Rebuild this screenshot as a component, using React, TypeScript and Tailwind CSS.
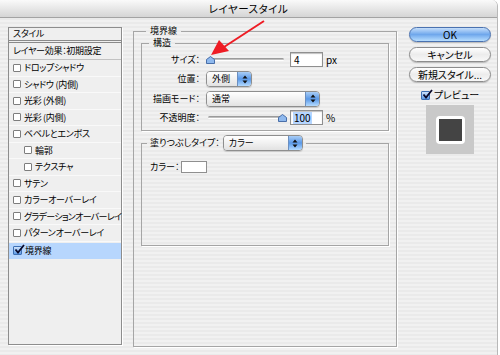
const jp = "font-['Noto_Sans_CJK_JP',sans-serif] [font-feature-settings:'palt']";

function Check({ on = false }: { on?: boolean }) {
  if (on)
    return (
      <span className="relative inline-block w-[9px] h-[9px] shrink-0 rounded-[1px] border border-[#3d6fb4] bg-gradient-to-b from-[#cfe3fb] to-[#5c9ae6]">
        <svg className="absolute -top-[3px] left-0" width="11" height="11" viewBox="0 0 11 11">
          <path d="M1.5 5.5 L4 8.5 L10 1" stroke="#0a0a2a" strokeWidth="1.8" fill="none" />
        </svg>
      </span>
    );
  return <span className="inline-block w-[8px] h-[8px] shrink-0 rounded-[1px] border border-[#7d7d7d] bg-white" />;
}

function Popup({ label, w }: { label: string; w: string }) {
  return (
    <div className={`${w} h-[16px] flex rounded-[4px] border border-[#8e8e8e] overflow-hidden shadow-[0_1px_1px_rgba(0,0,0,0.15)]`}>
      <div className="flex-1 flex items-center pl-[5px] bg-gradient-to-b from-white via-[#f1f1f1] to-[#e2e2e2] text-[9px] leading-[12px] text-black">{label}</div>
      <div className="w-[14px] flex items-center justify-center bg-gradient-to-b from-[#a9cdf6] via-[#5a98e6] to-[#b4dbff] border-l border-[#6b8fc0]">
        <svg width="6" height="9" viewBox="0 0 6 9">
          <path d="M3 0.5 L5.5 3.5 H0.5 Z M3 8.5 L5.5 5.5 H0.5 Z" fill="#111" />
        </svg>
      </div>
    </div>
  );
}

function Slider({ pos }: { pos: number }) {
  return (
    <div className="relative w-[76px] h-[10px] flex items-center">
      <div className="w-full h-[3px] rounded-full bg-gradient-to-b from-[#8a8a8a] to-[#d0d0d0] border-b border-white" />
      <svg className="absolute top-[1px]" style={{ left: pos - 4 }} width="9" height="8" viewBox="0 0 9 8">
        <path d="M4.5 0.5 L8.5 3.5 V7.5 H0.5 V3.5 Z" fill="#8fb9ee" stroke="#3c63a0" strokeWidth="0.9" />
      </svg>
    </div>
  );
}

function Field({ value, sel = false }: { value: string; sel?: boolean }) {
  return (
    <div className="w-[33px] h-[15px] bg-white border border-[#8f8f8f] shadow-[inset_0_1px_1px_rgba(0,0,0,0.25)] flex items-center pl-[2px] text-[10px]">
      <span className={sel ? "bg-[#b5d5ff] px-[1px] leading-[12px]" : "leading-[12px] pl-[1px]"}>{value}</span>
    </div>
  );
}

function Row({ children, indent = false, tight = false }: { children: React.ReactNode; indent?: boolean; tight?: boolean }) {
  return (
    <div className={`h-[16.5px] flex items-center gap-[3px] whitespace-nowrap ${indent ? "pl-[15px]" : "pl-[4px]"} border-b border-[#f9f9f9]`}>
      <Check />
      <span className={tight ? "tracking-[-0.7px]" : ""}>{children}</span>
    </div>
  );
}

function Aqua({ children, blue = false }: { children: React.ReactNode; blue?: boolean }) {
  return (
    <div
      className={`h-[15px] rounded-full flex items-center justify-center text-[10px] leading-[12px] text-black border shadow-[0_1px_1px_rgba(0,0,0,0.2)] ${
        blue
          ? "border-[#4a72b0] bg-gradient-to-b from-[#c5defa] via-[#6fa7ec] to-[#b8defe]"
          : "border-[#8c8c8c] bg-gradient-to-b from-white via-[#ececec] to-[#f8f8f8]"
      }`}
    >
      {children}
    </div>
  );
}

export default function App() {
  return (
    <div className={`relative w-[500px] h-[355px] overflow-hidden bg-white ${jp} text-black text-[9px]`}>
      <div className="w-[498px] h-[355px] rounded-tr-[6px] overflow-hidden bg-[image:repeating-linear-gradient(180deg,#f1f1f1_0px,#f1f1f1_2px,#eaeaea_2px,#eaeaea_4px)] border-r border-[#b8b8b8]">
        <div className="h-[18px] flex items-center justify-center bg-gradient-to-b from-[#fafafa] to-[#d5d5d5] border-b border-[#a3a3a3] text-[10.5px] tracking-[0.5px]">
          レイヤースタイル
        </div>

        <div className="flex items-start pl-[8px] pt-[9px]">
          <div className="w-[114px] h-[318px] border border-[#8d8d8d] bg-[#efefef] shadow-[1px_1px_0_#fff] tracking-[-0.3px]">
            <div className="h-[15px] flex items-center pl-[4px] border-b-[3px] border-double border-[#8a8a8a]">スタイル</div>
            <div className="h-[17px] flex items-center pl-[4px] border-b border-[#c2c2c2] whitespace-nowrap">レイヤー効果：初期設定</div>
            <Row>ドロップシャドウ</Row>
            <Row>シャドウ (内側)</Row>
            <Row>光彩 (外側)</Row>
            <Row>光彩 (内側)</Row>
            <Row>ベベルとエンボス</Row>
            <Row indent>輪郭</Row>
            <Row indent>テクスチャ</Row>
            <Row>サテン</Row>
            <Row>カラーオーバーレイ</Row>
            <Row tight>グラデーションオーバーレイ</Row>
            <Row>パターンオーバーレイ</Row>
            <div className="mt-[1px] h-[16px] flex items-center gap-[3px] pl-[4px] bg-[#b7d6fd]">
              <Check on />
              <span>境界線</span>
            </div>
          </div>

          <fieldset className="ml-[11px] -mt-[2px] w-[264px] border border-[#a5a5a5] shadow-[1px_1px_0_#fff] px-[7px]">
            <legend className="ml-[5px] px-[4px] leading-[12px]">境界線</legend>

            <fieldset className="border border-[#a5a5a5] shadow-[1px_1px_0_#fff] pb-[3px]">
              <legend className="ml-[7px] px-[4px] leading-[12px]">構造</legend>
              <div className="mt-[1px] h-[19px] flex items-center">
                <span className="w-[59px] text-right pr-[1px]">サイズ：</span>
                <div className="ml-[7px]"><Slider pos={2} /></div>
                <div className="ml-[6px]"><Field value="4" /></div>
                <span className="ml-[3px] text-[10px]">px</span>
              </div>
              <div className="h-[20px] flex items-center">
                <span className="w-[59px] text-right pr-[1px]">位置：</span>
                <div className="ml-[5px]"><Popup label="外側" w="w-[46px]" /></div>
              </div>
              <div className="h-[19px] flex items-center">
                <span className="w-[59px] text-right pr-[1px]">描画モード：</span>
                <div className="ml-[5px]"><Popup label="通常" w="w-[114px]" /></div>
              </div>
              <div className="h-[19px] flex items-center">
                <span className="w-[59px] text-right pr-[1px]">不透明度：</span>
                <div className="ml-[7px]"><Slider pos={74} /></div>
                <div className="ml-[6px]"><Field value="100" sel /></div>
                <span className="ml-[3px] text-[10px]">%</span>
              </div>
            </fieldset>

            <fieldset className="mt-[4px] border border-[#a5a5a5] shadow-[1px_1px_0_#fff]">
              <legend className="ml-[5px] px-[3px] h-[16px] flex items-center gap-[3px] leading-[12px]">
                <span>塗りつぶしタイプ：</span>
                <Popup label="カラー" w="w-[80px]" />
              </legend>
              <div className="h-[94px] pt-[9px] pl-[8px]">
                <div className="flex items-center gap-[2px]">
                  <span>カラー：</span>
                  <div className="w-[26px] h-[12px] bg-white border border-[#8f8f8f]" />
                </div>
              </div>
            </fieldset>
            <div className="h-[100px]" />
          </fieldset>

          <div className="ml-[12px] w-[82px] flex flex-col gap-[5px]">
            <Aqua blue>OK</Aqua>
            <Aqua>キャンセル</Aqua>
            <Aqua>新規スタイル...</Aqua>
            <div className="mt-[2px] h-[12px] flex items-center justify-center gap-[4px] text-[10px] leading-[12px]">
              <Check on />
              <span>プレビュー</span>
            </div>
            <div className="-mt-[1px] self-center w-[48px] h-[49px] bg-[#c9c9c9] flex items-center justify-center">
              <div className="w-[29px] h-[28px] rounded-[4px] bg-white flex items-center justify-center">
                <div className="w-[23px] h-[22px] bg-[#444444]" />
              </div>
            </div>
          </div>
        </div>
      </div>

      <svg className="absolute inset-0 pointer-events-none" width="500" height="355" viewBox="0 0 500 355">
        <line x1="264" y1="21" x2="224" y2="47" stroke="#ee1c24" strokeWidth="2" />
        <path d="M211 55 L219 40 L229 51 Z" fill="#ee1c24" />
      </svg>
    </div>
  );
}
